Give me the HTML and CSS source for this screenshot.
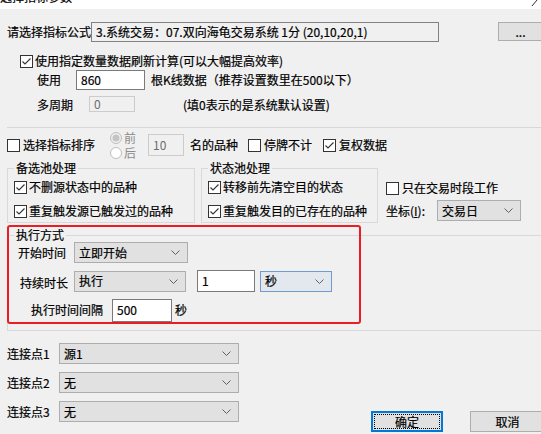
FILE: index.html
```html
<!DOCTYPE html>
<html lang="zh-CN">
<head>
<meta charset="utf-8">
<title>选择指标参数</title>
<link rel="stylesheet" href="styles.css">
</head>
<body>
<div class="titlebar">
  <span class="title">选择指标参数</span>
  <svg class="close" width="8" height="6" viewBox="0 0 8 6"><line x1="1" y1="6" x2="6" y2="0" stroke="#333" stroke-width="1"/></svg>
</div>
<div class="content">
  <div class="row r1">
    <span class="lbl-formula">请选择指标公式</span>
    <div class="field ro formula">3.系统交易：07.双向海龟交易系统 1分 (20,10,20,1)</div>
    <div class="btn more">...</div>
  </div>

  <div class="row r2">
    <span class="cb"><svg width="13" height="13" viewBox="0 0 13 13"><rect x="0.5" y="0.5" width="12" height="12" fill="#fff" stroke="#333"/><polyline points="2.5,6.5 5,9 10.5,3.5" fill="none" stroke="#333" stroke-width="1.1"/></svg></span>
    <span class="cb-text">使用指定数量数据刷新计算(可以大幅提高效率)</span>
  </div>

  <div class="row r3">
    <span class="lbl-use">使用</span>
    <div class="field bars">860</div>
    <span class="after-bars">根K线数据（推荐设置数里在500以下）</span>
  </div>

  <div class="row r4">
    <span class="lbl-multi">多周期</span>
    <div class="field dis multi">0</div>
    <span class="after-multi">(填0表示的是系统默认设置)</span>
  </div>

  <div class="sep"></div>

  <div class="row r5">
    <span class="cb"><svg width="13" height="13" viewBox="0 0 13 13"><rect x="0.5" y="0.5" width="12" height="12" fill="#fff" stroke="#333"/></svg></span>
    <span class="cb-text sort-text">选择指标排序</span>
    <div class="radios">
      <div class="radio"><svg width="12" height="12" viewBox="0 0 12 12"><circle cx="6" cy="6" r="5.5" fill="#f0f0f0" stroke="#bcbcbc"/><circle cx="6" cy="6" r="3.5" fill="#c4c4c4"/></svg><span>前</span></div>
      <div class="radio"><svg width="12" height="12" viewBox="0 0 12 12"><circle cx="6" cy="6" r="5.5" fill="#fff" stroke="#bcbcbc"/></svg><span>后</span></div>
    </div>
    <div class="field dis topn">10</div>
    <span class="after-topn">名的品种</span>
    <span class="cb cb-stop"><svg width="13" height="13" viewBox="0 0 13 13"><rect x="0.5" y="0.5" width="12" height="12" fill="#fff" stroke="#333"/></svg></span>
    <span class="cb-text">停牌不计</span>
    <span class="cb cb-fq"><svg width="13" height="13" viewBox="0 0 13 13"><rect x="0.5" y="0.5" width="12" height="12" fill="#fff" stroke="#333"/><polyline points="2.5,6.5 5,9 10.5,3.5" fill="none" stroke="#333" stroke-width="1.1"/></svg></span>
    <span class="cb-text">复权数据</span>
  </div>

  <div class="groups">
    <div class="group g1">
      <div class="gtitle">备选池处理</div>
      <div class="row gitem first">
        <span class="cb"><svg width="13" height="13" viewBox="0 0 13 13"><rect x="0.5" y="0.5" width="12" height="12" fill="#fff" stroke="#333"/><polyline points="2.5,6.5 5,9 10.5,3.5" fill="none" stroke="#333" stroke-width="1.1"/></svg></span>
        <span class="cb-text">不删源状态中的品种</span>
      </div>
      <div class="row gitem second">
        <span class="cb"><svg width="13" height="13" viewBox="0 0 13 13"><rect x="0.5" y="0.5" width="12" height="12" fill="#fff" stroke="#333"/><polyline points="2.5,6.5 5,9 10.5,3.5" fill="none" stroke="#333" stroke-width="1.1"/></svg></span>
        <span class="cb-text">重复触发源已触发过的品种</span>
      </div>
    </div>
    <div class="group g2">
      <div class="gtitle">状态池处理</div>
      <div class="row gitem first">
        <span class="cb"><svg width="13" height="13" viewBox="0 0 13 13"><rect x="0.5" y="0.5" width="12" height="12" fill="#fff" stroke="#333"/><polyline points="2.5,6.5 5,9 10.5,3.5" fill="none" stroke="#333" stroke-width="1.1"/></svg></span>
        <span class="cb-text">转移前先清空目的状态</span>
      </div>
      <div class="row gitem second">
        <span class="cb"><svg width="13" height="13" viewBox="0 0 13 13"><rect x="0.5" y="0.5" width="12" height="12" fill="#fff" stroke="#333"/><polyline points="2.5,6.5 5,9 10.5,3.5" fill="none" stroke="#333" stroke-width="1.1"/></svg></span>
        <span class="cb-text">重复触发目的已存在的品种</span>
      </div>
    </div>
    <div class="side">
      <div class="row side-cb">
        <span class="cb"><svg width="13" height="13" viewBox="0 0 13 13"><rect x="0.5" y="0.5" width="12" height="12" fill="#fff" stroke="#333"/></svg></span>
        <span class="cb-text">只在交易时段工作</span>
      </div>
      <div class="row side-axis">
        <span class="lbl-axis">坐标(<u>I</u>):</span>
        <div class="select axis"><span>交易日</span><svg width="9" height="5" viewBox="0 0 9 5"><polyline points="0.5,0.5 4.5,4.5 8.5,0.5" fill="none" stroke="#606060"/></svg></div>
      </div>
    </div>
  </div>

  <div class="group exec">
    <div class="highlight"></div>
    <div class="gtitle">执行方式</div>
    <div class="row ea">
      <span class="lbl-start">开始时间</span>
      <div class="select start"><span>立即开始</span><svg width="9" height="5" viewBox="0 0 9 5"><polyline points="0.5,0.5 4.5,4.5 8.5,0.5" fill="none" stroke="#606060"/></svg></div>
    </div>
    <div class="row eb">
      <span class="lbl-dur">持续时长</span>
      <div class="select dur"><span>执行</span><svg width="9" height="5" viewBox="0 0 9 5"><polyline points="0.5,0.5 4.5,4.5 8.5,0.5" fill="none" stroke="#606060"/></svg></div>
      <div class="field num">1</div>
      <div class="select unit"><span>秒</span><svg width="9" height="5" viewBox="0 0 9 5"><polyline points="0.5,0.5 4.5,4.5 8.5,0.5" fill="none" stroke="#606060"/></svg></div>
    </div>
    <div class="row ec">
      <span class="lbl-int">执行时间间隔</span>
      <div class="field interval">500</div>
      <span class="after-int">秒</span>
    </div>
  </div>

  <div class="bottom">
    <div class="links">
      <div class="row link l1">
        <span class="lbl-link">连接点1</span>
        <div class="select lsel"><span>源1</span><svg width="9" height="5" viewBox="0 0 9 5"><polyline points="0.5,0.5 4.5,4.5 8.5,0.5" fill="none" stroke="#606060"/></svg></div>
      </div>
      <div class="row link l2">
        <span class="lbl-link">连接点2</span>
        <div class="select lsel"><span>无</span><svg width="9" height="5" viewBox="0 0 9 5"><polyline points="0.5,0.5 4.5,4.5 8.5,0.5" fill="none" stroke="#606060"/></svg></div>
      </div>
      <div class="row link l3">
        <span class="lbl-link">连接点3</span>
        <div class="select lsel"><span>无</span><svg width="9" height="5" viewBox="0 0 9 5"><polyline points="0.5,0.5 4.5,4.5 8.5,0.5" fill="none" stroke="#606060"/></svg></div>
      </div>
    </div>
    <div class="buttons">
      <div class="btn ok"><span class="focus">确定</span></div>
      <div class="btn cancel">取消</div>
    </div>
  </div>
</div>
</body>
</html>
```
FILE: styles.css
```css
* { box-sizing: border-box; }
html, body { margin: 0; padding: 0; }
body {
  width: 541px;
  height: 434px;
  overflow: hidden;
  background: #f0f0f0;
  font-family: "Noto Sans CJK SC", "Microsoft YaHei", sans-serif;
  font-size: 12px;
  line-height: 16px;
  color: #000;
  -webkit-text-stroke: 0.2px #000;
}

.titlebar {
  height: 9px;
  background: #fff;
  overflow: hidden;
  display: flex;
  justify-content: space-between;
  align-items: flex-start;
}
.title { margin-top: -11px; line-height: 16px; white-space: nowrap; }
.close { margin-right: 2px; }

.content { padding-left: 7px; }
.row { display: flex; align-items: center; white-space: nowrap; }

.cb { display: flex; width: 13px; height: 13px; flex: none; }
.cb svg { display: block; }

.field {
  height: 20px;
  border: 1px solid #7a7a7a;
  background: #fff;
  padding: 0 4px;
  display: flex;
  align-items: center;
  flex: none;
}
.field.ro { background: #f0f0f0; border-color: #828282; }
.field.dis { background: #f0f0f0; border-color: #cccccc; color: #6d6d6d; -webkit-text-stroke: 0; }

.select {
  height: 21px;
  border: 1px solid #adadad;
  background: #e1e1e1;
  display: flex;
  align-items: center;
  justify-content: space-between;
  padding: 0 7px 0 4px;
  flex: none;
}
.select svg { display: block; }

.btn {
  height: 20px;
  border: 1px solid #adadad;
  background: #e1e1e1;
  display: flex;
  align-items: center;
  justify-content: center;
  flex: none;
}

/* row 1 */
.r1 { margin-top: 13px; height: 20px; }
.lbl-formula { width: 92px; }
.formula { width: 348px; padding-left: 4px; }
.more { width: 45px; height: 19px; margin-left: 59px; align-self: flex-start; }

/* row 2 */
.r2 { margin-top: 10px; height: 18px; padding-left: 13px; }
.r2 .cb-text { margin-left: 2px; }

/* row 3 */
.r3 { margin-top: 0; height: 20px; padding-left: 30px; }
.lbl-use { width: 39px; }
.bars { width: 69px; }
.after-bars { margin-left: 6px; }

/* row 4 */
.r4 { margin-top: 5px; height: 17px; padding-left: 30px; }
.lbl-multi { width: 52px; margin-top: 3px; }
.multi { width: 46px; height: 16px; }
.after-multi { margin-left: 48px; margin-top: 3px; }

.sep { margin-top: 15px; height: 1px; background: #d7d7d7; }

/* row 5 */
.r5 { margin-top: 4px; height: 26px; }
.sort-text { margin-left: 3px; width: 87px; }
.radios { width: 38px; height: 30px; display: flex; flex-direction: column; color: #8c8c8c; -webkit-text-stroke: 0; }
.radio { display: flex; align-items: center; height: 15px; }
.radio span { margin-left: 2px; line-height: 13px; }
.topn { width: 36px; height: 22px; }
.after-topn { margin-left: 6px; }
.cb-stop { margin-left: 10px; }
.cb-fq { margin-left: 11px; }
.r5 .cb + .cb-text { margin-left: 3px; }

/* groups */
.groups { display: flex; align-items: flex-start; margin-top: 10px; }
.group { border: 1px solid #d9d9d9; flex: none; }
.gtitle {
  display: block;
  width: fit-content;
  height: 16px;
  margin-top: -9px;
  margin-left: 6px;
  padding: 0 2px;
  background: #f0f0f0;
  line-height: 16px;
}
.g1 { width: 188px; height: 55px; }
.g2 { width: 177px; height: 55px; margin-left: 6px; }
.gitem { height: 16px; padding-left: 6px; }
.gitem .cb-text { margin-left: 2px; }
.gitem.first { margin-top: 3px; }
.gitem.second { margin-top: 8px; }

.side { margin-left: 8px; display: flex; flex-direction: column; }
.side-cb { margin-top: 12px; height: 16px; }
.side-cb .cb-text { margin-left: 3px; }
.side-axis { margin-top: 4px; height: 21px; }
.lbl-axis { width: 51px; }
.axis { width: 84px; }

/* exec group */
.exec {
  position: relative;
  margin-top: 12px;
  width: 545px;
  height: 96px;
}
.exec .gtitle { height: 14px; line-height: 14px; margin-top: -8px; }
.highlight {
  position: absolute;
  left: -1px;
  top: -11px;
  width: 354px;
  height: 99px;
  border: 2px solid #ec1c24;
  border-radius: 3px;
  pointer-events: none;
}
.ea { height: 21px; padding-left: 10px; }
.lbl-start { width: 56px; }
.start { width: 114px; }
.eb { margin-top: 7px; height: 22px; padding-left: 12px; }
.lbl-dur { width: 54px; margin-top: 4px; }
.dur { width: 112px; }
.num { width: 58px; height: 22px; margin-left: 11px; }
.unit { width: 72px; margin-left: 5px; border-color: #6f9ccc; background: #e3e8ee; }
.ec { margin-top: 7px; height: 22px; padding-left: 23px; }
.lbl-int { width: 81px; }
.interval { width: 60px; height: 23px; }
.after-int { margin-left: 3px; }

/* bottom */
.bottom { display: flex; align-items: flex-start; margin-top: 12px; }
.links { display: flex; flex-direction: column; }
.link { height: 21px; }
.l2, .l3 { margin-top: 8px; }
.lbl-link { width: 52px; }
.lsel { width: 180px; }

.buttons { display: flex; margin-top: 68px; margin-left: 132px; }
.ok {
  width: 72px;
  height: 21px;
  border: 2px solid #0078d7;
  padding: 1px;
}
.ok .focus {
  display: flex;
  align-items: center;
  justify-content: center;
  width: 100%;
  height: 100%;
  border: 1px dotted #000;
}
.cancel { width: 75px; height: 21px; margin-left: 27px; }
```
